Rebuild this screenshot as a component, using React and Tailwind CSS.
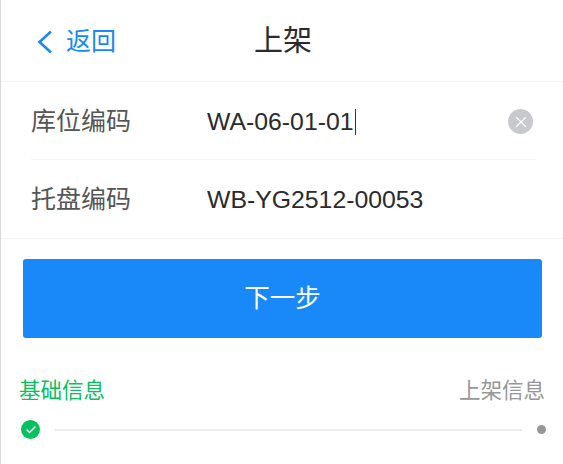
import { X, Check } from 'lucide-react'

const FONT = "font-['Liberation_Sans','Noto_Sans_CJK_SC',sans-serif]"

function Field({ label, value, focused, divider }) {
  return (
    <div className={`h-[78px] ml-[30px] mr-[27px] pt-[2px] flex items-center ${divider ? 'border-b border-[#f5f5f5]' : ''}`}>
      <span className="w-[176px] text-[25px] text-[#555555]">{label}</span>
      <span className="flex-1 text-[24.8px] text-[#2b2b2b] flex items-center">
        {value}
        {focused && <span className="w-px h-[26px] bg-[#333333] ml-px" />}
      </span>
      {focused && (
        <span className="w-[25px] h-[25px] mr-[3px] rounded-full bg-[#c8c9cc] flex items-center justify-center">
          <X className="w-[18px] h-[18px] text-white" strokeWidth={1.5} />
        </span>
      )}
    </div>
  )
}

export default function App() {
  return (
    <div className={`w-[563px] h-[464px] bg-white border-l border-[#d9d9d9] overflow-hidden ${FONT}`}>
      {/* Header */}
      <div className="h-[82px] border-b border-[#f5f5f5] pt-[2px] flex items-center relative">
        <div className="flex items-center pl-[36px] text-[#1989fa]">
          <svg width="16" height="24" viewBox="0 0 16 24" fill="none" stroke="currentColor" strokeWidth="2.6">
            <path d="M14 1.5 L2.5 12 L14 22.5" />
          </svg>
          <span className="text-[25px] ml-[13px]">返回</span>
        </div>
        <h1 className="absolute left-[253px] top-[23px] text-[29px] leading-[36px] font-normal text-[#2b2b2b]">上架</h1>
      </div>

      {/* Form */}
      <div className="border-b border-[#f5f5f5]">
        <Field label="库位编码" value="WA-06-01-01" focused divider />
        <Field label="托盘编码" value="WB-YG2512-00053" />
      </div>

      {/* Submit */}
      <div className="pl-[22px] pt-[20px] pr-[21px]">
        <button className="w-full h-[79px] bg-[#1989fa] rounded-[3px] text-white text-[25.5px]">下一步</button>
      </div>

      {/* Steps */}
      <div className="mt-[39px] pl-[18px] pr-[17px]">
        <div className="flex justify-between text-[21.5px] leading-[28px] pr-px">
          <span className="text-[#07c160]">基础信息</span>
          <span className="text-[#969799]">上架信息</span>
        </div>
        <div className="flex items-center mt-[15px] pl-[2px]">
          <span className="w-[19px] h-[19px] rounded-full bg-[#07c160] flex items-center justify-center">
            <Check className="w-3 h-3 text-white" strokeWidth={3} />
          </span>
          <div className="flex-1 h-[2px] bg-[#ebedf0] ml-[15px] mr-[15px]" />
          <span className="w-[9px] h-[9px] rounded-full bg-[#969799]" />
        </div>
      </div>
    </div>
  )
}
